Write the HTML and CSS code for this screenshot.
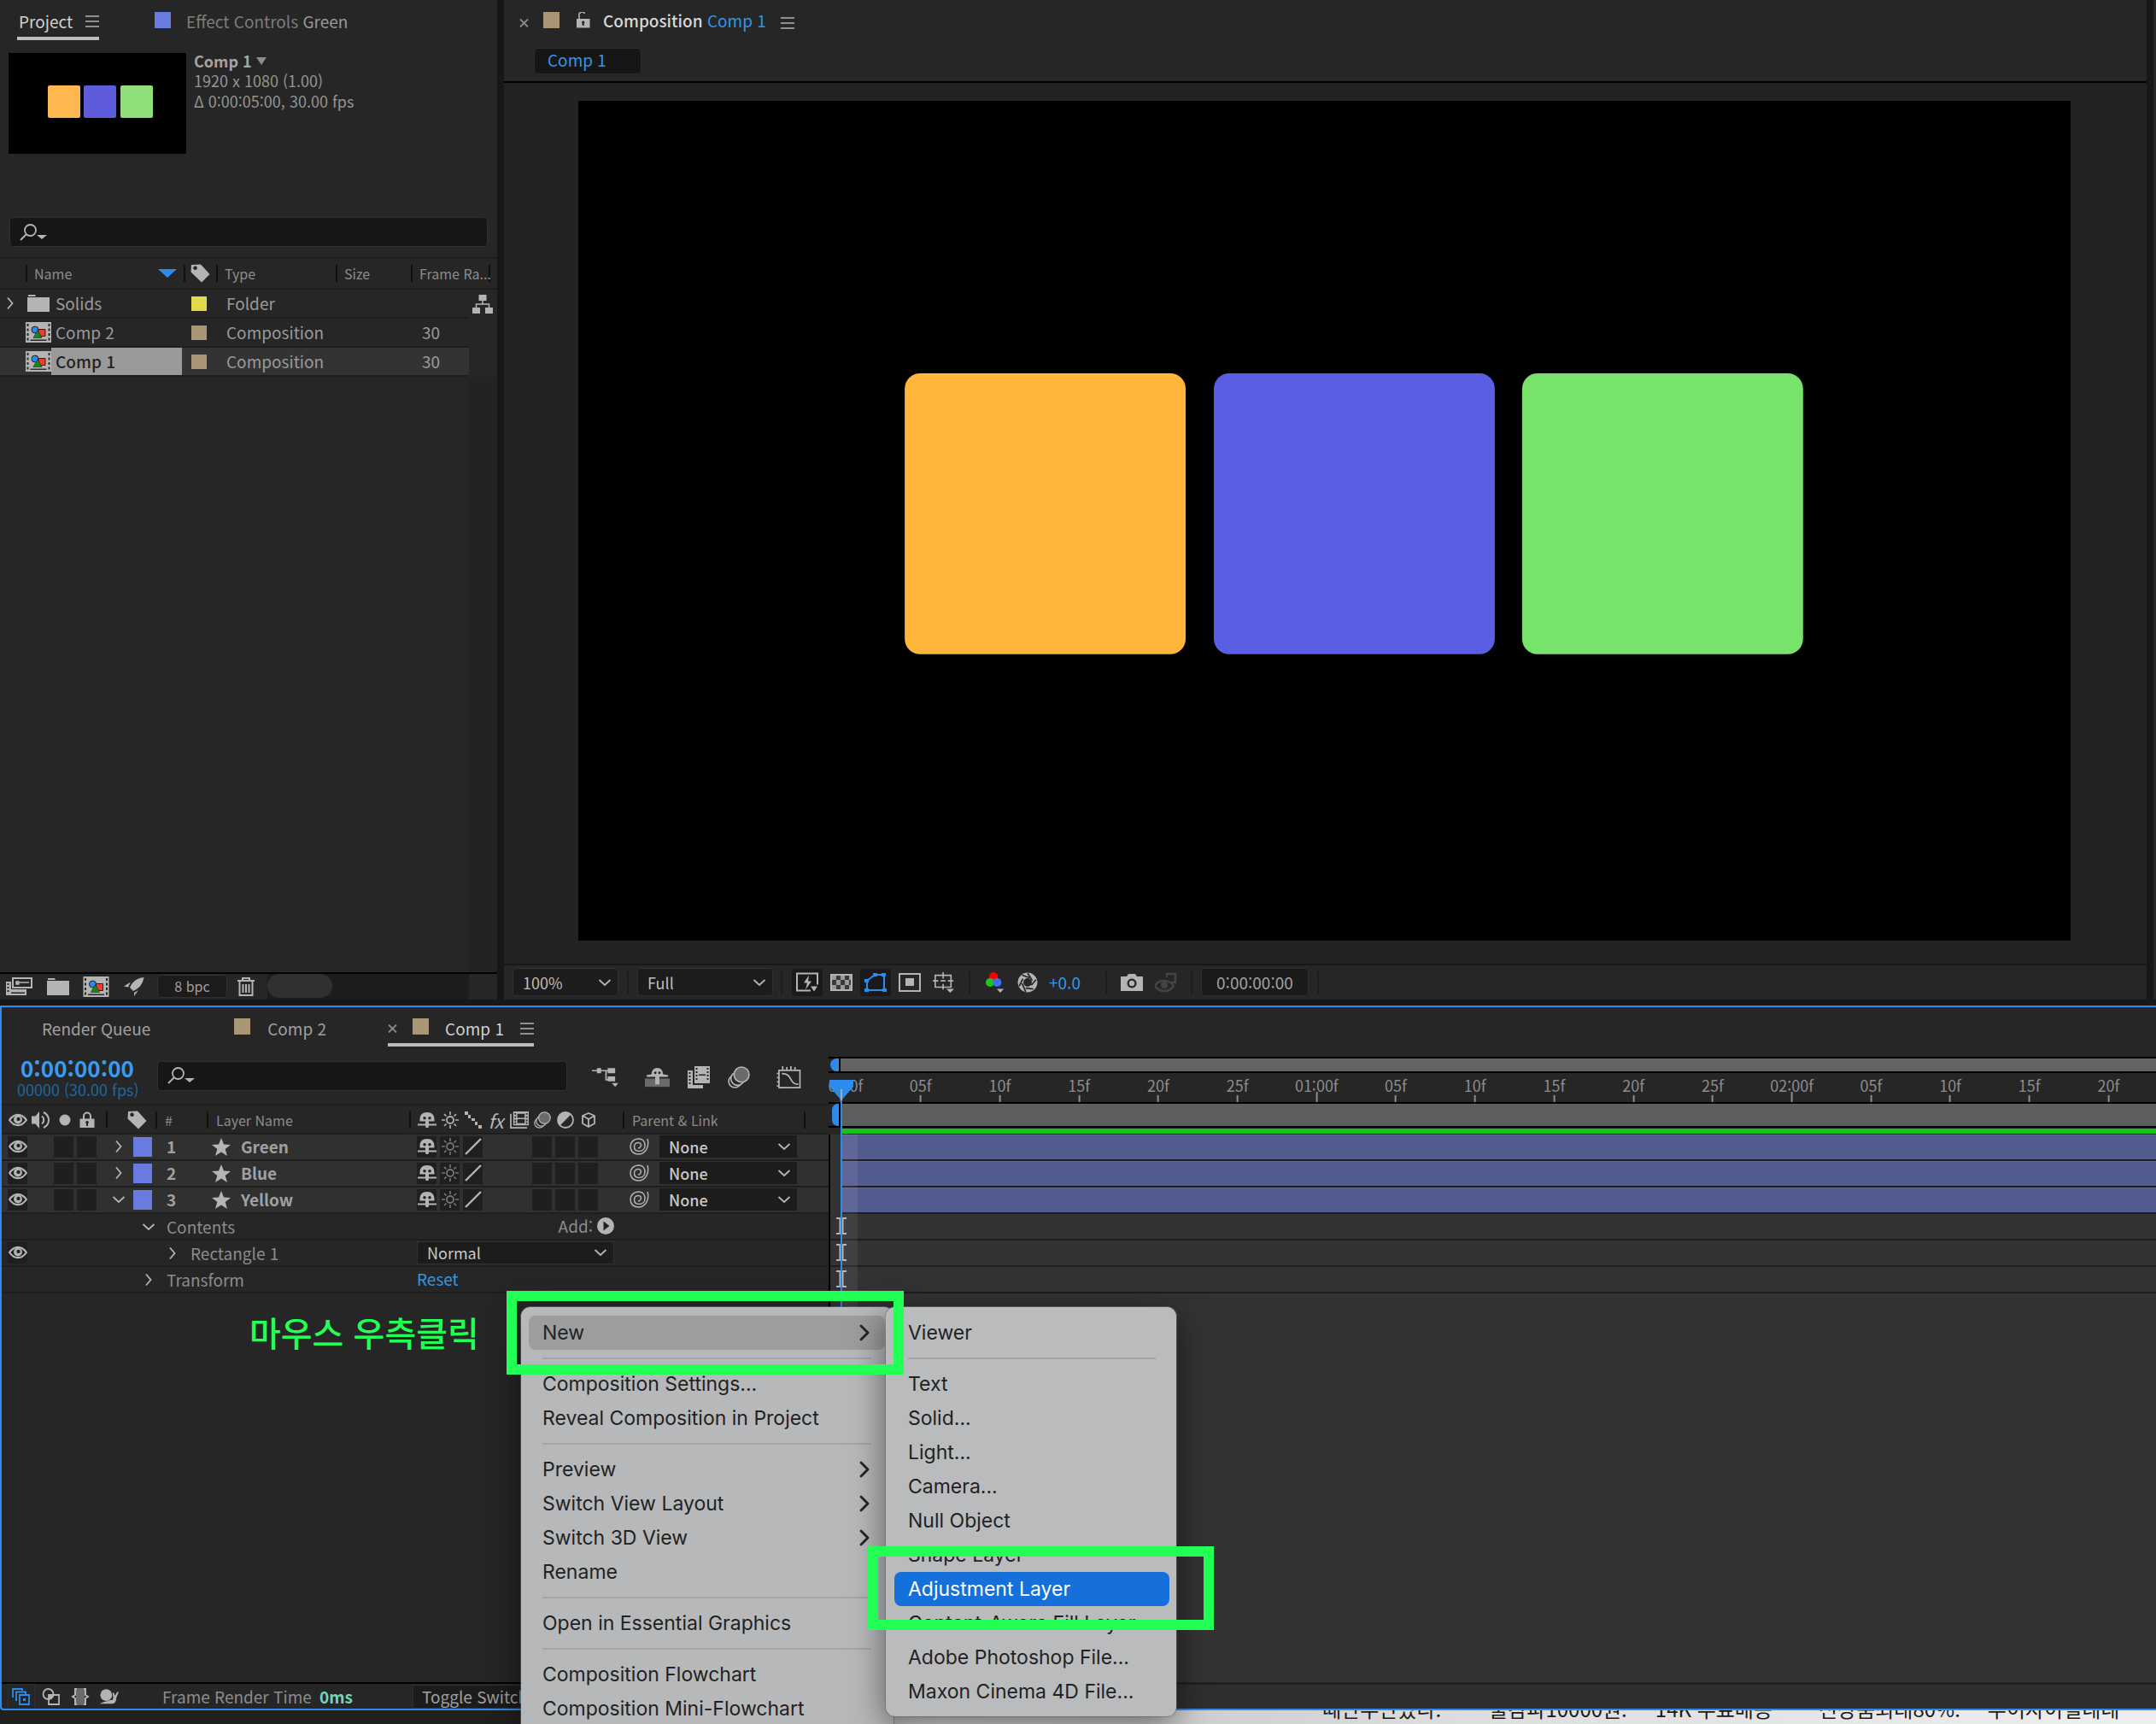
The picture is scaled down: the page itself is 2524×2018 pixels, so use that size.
FILE: index.html
```html
<!DOCTYPE html>
<html lang="ko">
<head>
<meta charset="utf-8">
<meta name="viewport" content="width=device-width, initial-scale=1">
<title>Composition Comp 1</title>
<link rel="stylesheet" href="styles.css">
</head>
<body>
<svg class="sprite" aria-hidden="true">
  <symbol id="i-menu" viewBox="0 0 16 14"><path d="M0 1h16M0 7h16M0 13h16" stroke="currentColor" stroke-width="1.5"/></symbol>
  <symbol id="i-close" viewBox="0 0 11 10"><path d="M1 .5l9 9M10 .5l-9 9" stroke="currentColor" stroke-width="1.8"/></symbol>
  <symbol id="i-right" viewBox="0 0 16 16"><path d="M5 1.500l5.500 6.500L5 14.500" fill="none" stroke="currentColor" stroke-width="1.8"/></symbol>
  <symbol id="i-more" viewBox="0 0 16 20"><path d="M4 2l8 8-8 8" fill="none" stroke="currentColor" stroke-width="2.800" stroke-linecap="round" stroke-linejoin="round"/></symbol>
  <symbol id="i-down" viewBox="0 0 16 16"><path d="M1.500 5l6.500 6 6.500-6" fill="none" stroke="currentColor" stroke-width="1.8"/></symbol>
  <symbol id="i-search" viewBox="0 0 32 20"><circle cx="12.500" cy="7.500" r="6.500" fill="none" stroke="currentColor" stroke-width="1.8"/><path d="M8 12l-7 7" stroke="currentColor" stroke-width="2"/><path d="M20 13h12l-6 5z" fill="currentColor"/></symbol>
  <symbol id="i-lock" viewBox="0 0 18 20"><path d="M5 9V5.500a4 4 0 0 1 8 0V9" fill="none" stroke="currentColor" stroke-width="2"/><path fill-rule="evenodd" d="M.5 8.500h17V19H.5zM9 11a1.800 1.800 0 0 0-1 3.300V17h2v-2.700A1.800 1.800 0 0 0 9 11z" fill="currentColor"/></symbol>
  <symbol id="i-unlock" viewBox="0 0 16 19"><path d="M3 8V4.500A3.500 3.500 0 0 1 9.500 2" fill="none" stroke="currentColor" stroke-width="1.600"/><path fill-rule="evenodd" d="M0 8h15.500v10.500H0zM7.700 10.500a1.800 1.800 0 0 0-1 3.200V16h2v-2.300a1.800 1.800 0 0 0-1-3.200z" fill="currentColor"/></symbol>
  <symbol id="i-tag" viewBox="0 0 23 22"><path fill-rule="evenodd" d="M1 1l11-.5L22.500 12 13 21.500.5 9.500zM5.500 2.500a2.300 2.300 0 1 0 .1 0z" fill="currentColor"/></symbol>
  <symbol id="i-folder" viewBox="0 0 26 20"><path d="M1 0h8l1 2H1zM0 3h26v17H0z" fill="currentColor"/></symbol>
  <symbol id="i-comp" viewBox="0 0 30 24"><path fill-rule="evenodd" d="M0 0h30v24H0zM1.500 2v3h2V2zm0 5.500v3h2v-3zm0 5.500v3h2v-3zm0 5.500v3h2v-3zM26.500 2v3h2V2zm0 5.500v3h2v-3zm0 5.500v3h2v-3zm0 5.500v3h2v-3zM5.500 20.500v1.500h19v-1.500z" fill="#b4b4b4"/><path d="M15 8.500h8v8h-8z" fill="#f03a34" stroke="#222" /><circle cx="11" cy="9" r="4" fill="#2d8ceb" stroke="#222"/><path d="M14 9.500l5 9H9z" fill="#118a1a" stroke="#222" stroke-width=".6"/></symbol>
  <symbol id="i-flow" viewBox="0 0 24 22"><path d="M7.500 0h9v7h-9zM0 15h9v7H0zM15 15h9v7h-9z" fill="currentColor"/><path d="M12 7v4M4.500 15v-4h15v4" fill="none" stroke="currentColor" stroke-width="1.500"/></symbol>
  <symbol id="i-interpret" viewBox="0 0 31 22"><path d="M8 1h22v11H8z" fill="none" stroke="currentColor" stroke-width="2"/><path d="M12 5h3v3h-3zM16 6h11" stroke="currentColor" fill="currentColor" stroke-width="1.500"/><path fill-rule="evenodd" d="M0 5h6v9h18v7H0zM1.500 7v2h2V7zm0 4v2h2v-2zm0 4v2h2v-2zM6 17.500h16V19H6z" fill="currentColor"/></symbol>
  <symbol id="i-rocket" viewBox="0 0 24 22"><path d="M23.500 0C15 1 10 5 7 12l4 4c7-3 11-8 12.500-16zM8 5.500L0 10.500l5 1zM12 18v4l5-7z" fill="currentColor"/></symbol>
  <symbol id="i-trash" viewBox="0 0 20 22"><path d="M0 4h20M6 4V1h8v3M2.500 5v16h15V5M6.500 8v10M10 8v10M13.500 8v10" fill="none" stroke="currentColor" stroke-width="2"/></symbol>
  <symbol id="i-eye" viewBox="0 0 20 14"><path d="M1 7c5-7.500 13-7.500 18 0-5 7.500-13 7.500-18 0z" fill="none" stroke="currentColor" stroke-width="2"/><circle cx="10" cy="6.500" r="4.500" fill="currentColor"/><circle cx="10.500" cy="6" r="2" fill="#222"/></symbol>
  <symbol id="i-speaker" viewBox="0 0 22 20"><path d="M0 5.500h4.500L9 0v20l-4.500-5.500H0z" fill="currentColor"/><path d="M12 5.500c3 2 3 7 0 9M14 1c8 4 8 14 0 18" fill="none" stroke="currentColor" stroke-width="2"/></symbol>
  <symbol id="i-dot" viewBox="0 0 22 20"><circle cx="12" cy="10" r="6.500" fill="currentColor"/></symbol>
  <symbol id="i-shy" viewBox="0 0 22 19"><path fill-rule="evenodd" d="M2.500 11C2 4 5 .5 11 .5S20 4 19.500 11H13v3h9v2h-9l-.5 2.500h-3L9 16H0v-2h9v-3zM8 5.500A1.600 1.600 0 1 0 8 9a1.600 1.600 0 0 0 0-3.500zm6 0A1.600 1.600 0 1 0 14 9a1.600 1.600 0 0 0 0-3.500z" fill="currentColor"/></symbol>
  <symbol id="i-sun" viewBox="0 0 20 20"><circle cx="10" cy="10" r="4" fill="none" stroke="currentColor" stroke-width="1.800"/><path d="M10 0v4M10 16v4M0 10h4M16 10h4M3 3l2.500 2.500M14.500 14.500L17 17M17 3l-2.500 2.500M5.500 14.500L3 17" stroke="currentColor" stroke-width="1.600"/></symbol>
  <symbol id="i-dots" viewBox="0 0 20 20"><path d="M0 0h4v4H0zM4 4h3v4H4zM8 8h4v3H8zM12 12h3v4h-3zM16 16h4v4h-4z" fill="currentColor"/></symbol>
  <symbol id="i-slash" viewBox="0 0 20 20"><path d="M1 19L19 1" stroke="currentColor" stroke-width="2.400"/></symbol>
  <symbol id="i-film" viewBox="0 0 23 21"><path fill-rule="evenodd" d="M4 0h19v17H4zM5.500 2v2h2V2zm0 4v2h2V6zm0 4v2h2v-2zm0 3.500v2h2v-2zM19.500 2v2h2V2zm0 4v2h2V6zm0 4v2h2v-2zm0 3.500v2h2v-2zM9 3v5h9V3zm0 6.500v5h9v-5z" fill="currentColor"/><path d="M1 3v17h20" fill="none" stroke="currentColor" stroke-width="1.800"/></symbol>
  <symbol id="i-blur" viewBox="0 0 25 25"><g stroke="currentColor" stroke-width="1.600"><circle cx="8" cy="17" r="7" fill="#262626"/><circle cx="11" cy="14" r="7.500" fill="#262626"/><circle cx="15.500" cy="9.500" r="8.500" fill="#6a6a6a"/></g></symbol>
  <symbol id="i-half" viewBox="0 0 20 20"><circle cx="10" cy="10" r="9" fill="none" stroke="currentColor" stroke-width="1.800"/><path d="M16.400 3.600A9 9 0 1 0 3.600 16.400z" fill="currentColor"/></symbol>
  <symbol id="i-cube" viewBox="-1 -1 20 20"><path d="M9 1l7 3v9l-7 4-7-4V4zM2 4l7 4 7-4M9 8v9" fill="none" stroke="currentColor" stroke-width="1.800"/></symbol>
  <symbol id="i-star" viewBox="0 0 22 21"><path d="M11 0l3 7.500 8 .4-6.300 5L18 21l-7-4.600L4 21l2.300-8.100L0 7.900l8-.4z" fill="currentColor"/></symbol>
  <symbol id="i-whip" viewBox="0 0 23 20"><path d="M21 1c2.500 9-2 18-11 18-5.500 0-9-4-9-9s4-9 9.500-9S18 5 18 9s-3 6.500-7 6.500S5.500 13 5.500 10 8 5.500 10.500 5.500 14 8 13 10s-2 2-3 1.500" fill="none" stroke="currentColor" stroke-width="1.500"/></symbol>
  <symbol id="i-play" viewBox="0 0 20 20"><circle cx="10" cy="10" r="10" fill="currentColor"/><path d="M7.500 4.500l7 5.500-7 5.500z" fill="#222"/></symbol>
  <symbol id="i-tree" viewBox="0 0 32 24"><path d="M0 4h28M17 4v11h4" stroke="currentColor" stroke-width="1.800" fill="none"/><path d="M6 1h5v6H6zM19 1h9v6h-9zM19 11h9v6h-9zM24 19h8l-4 4.500z" fill="currentColor"/></symbol>
  <symbol id="i-shybox" viewBox="0 0 30 23"><path d="M0 13h30v10H0z" fill="#6a6a6a"/><path fill-rule="evenodd" d="M8 8C8 3 11 0 15 0s7 3 7 8l6 1v2H17.500v9h-5v-9H2V9zM12.500 4.500a1.500 1.500 0 1 0 .1 0zm5 0a1.500 1.500 0 1 0 .1 0z" fill="currentColor"/></symbol>
  <symbol id="i-filmbig" viewBox="0 0 26 26"><path fill-rule="evenodd" d="M8 0h18v20H8zM9.500 2v2h2V2zm0 4v2h2V6zm0 4v2h2v-2zm0 4v2h2v-2zM22.500 2v2h2V2zm0 4v2h2V6zm0 4v2h2v-2zm0 4v2h2v-2zM13 9.500h8V11h-8z" fill="currentColor"/><path fill-rule="evenodd" d="M0 5h6v17h12v4H0zM1.500 7v2h2V7zm0 4v2h2v-2zm0 4v2h2v-2zm0 4v2h2v-2z" fill="currentColor"/></symbol>
  <symbol id="i-graph" viewBox="0 0 29 27"><path d="M2.500 5h25.500v21H2.500zM7 0v5M12 1v4M17 0v5M22 1v4M0 9h3M0 14h3M0 19h3M0 24h3" fill="none" stroke="currentColor" stroke-width="1.800"/><path d="M6 9c14 0 8 13 20 13" fill="none" stroke="currentColor" stroke-width="1.800"/></symbol>
  <symbol id="i-fast" viewBox="0 0 26 23"><path d="M25 14V1H1v20h16" fill="none" stroke="currentColor" stroke-width="2"/><path d="M15 3l-6 9h4l-2 8 7-10h-4zM17 16h8l-4 6z" fill="currentColor"/></symbol>
  <symbol id="i-checker" viewBox="0 0 26 20"><path d="M1 1h24v18H1z" fill="#3a3a3a" stroke="currentColor" stroke-width="2"/><path d="M2 2h5v5H2zM12 2h5v5h-5zM7 7h5v6H7zM17 7h5v6h-5zM2 13h5v5H2zM12 13h5v5h-5zM22 2h2v5h-2zM22 13h2v5h-2z" fill="#9a9a9a"/></symbol>
  <symbol id="i-mask" viewBox="0 0 26 22"><path d="M3 20V9l9-7h11v18z" fill="none" stroke="currentColor" stroke-width="2"/><path d="M0 18h5v4H0zM0 7h5v4H0zM10 0h5v4h-5zM20 0h5v4h-5zM21 18h5v4h-5z" fill="currentColor"/></symbol>
  <symbol id="i-region" viewBox="0 0 26 22"><path d="M1 1h24v20H1z" fill="none" stroke="currentColor" stroke-width="2"/><path d="M8 6h10v9H8z" fill="currentColor"/></symbol>
  <symbol id="i-grid" viewBox="0 0 28 26"><path d="M3 4h20v15H3zM13 0v8M13 15v7M0 11h7M19 11h7M10 11h6" fill="none" stroke="currentColor" stroke-width="1.800"/><path d="M17 21h10l-5 5z" fill="currentColor"/></symbol>
  <symbol id="i-rgb" viewBox="0 0 24 26"><circle cx="10" cy="5.500" r="5.500" fill="#f00"/><circle cx="5.500" cy="13" r="5.500" fill="#1cc41c"/><circle cx="14.500" cy="13" r="5.500" fill="#4169ff"/><path d="M14 21h9l-4.500 5z" fill="currentColor"/></symbol>
  <symbol id="i-aperture" viewBox="0 0 22 22"><circle cx="11" cy="11" r="7.500" fill="none" stroke="currentColor" stroke-width="6"/><path d="M11 1l5 8M20 8l-5 6M17 18l-8-1M9 21l-4-9M2 15l4-8M5 3l8 3" stroke="#262626" stroke-width="1.600"/></symbol>
  <symbol id="i-camera" viewBox="0 0 26 20"><path fill-rule="evenodd" d="M0 3h7l2-3h8l2 3h7v17H0zM13 5.500a5.500 5.500 0 1 0 .1 0z" fill="currentColor"/><circle cx="13" cy="11" r="3.200" fill="currentColor"/></symbol>
  <symbol id="i-ghost" viewBox="0 0 26 24"><path d="M0 16c5-8 17-8 22 0-5 8-17 8-22 0z" fill="none" stroke="currentColor" stroke-width="2.500"/><circle cx="11" cy="15" r="4" fill="currentColor"/><path d="M14 6V2h10v10h-5" fill="none" stroke="currentColor" stroke-width="2.500"/></symbol>
  <symbol id="i-stack" viewBox="0 0 22 20"><path d="M9 8h11v11H9zM6 14H5V4.500h11V7M2 10H1V1h11v2" fill="none" stroke="currentColor" stroke-width="1.800"/><path d="M13 12h3v3h-3z" fill="currentColor"/></symbol>
  <symbol id="i-modes" viewBox="0 0 22 20"><circle cx="7.500" cy="7" r="6" fill="none" stroke="currentColor" stroke-width="1.800"/><path d="M8 8h12v11H8z" fill="none" stroke="currentColor" stroke-width="1.800"/><path d="M8 8h5l-1 4-4 2z" fill="currentColor"/></symbol>
  <symbol id="i-braces" viewBox="0 0 22 20"><path d="M6 0h10v20H6z" fill="#6a6a6a"/><path d="M7 1H5v7l-3 2 3 2v7h2M15 1h2v7l3 2-3 2v7h-2" fill="none" stroke="currentColor" stroke-width="2"/></symbol>
  <symbol id="i-snail" viewBox="0 0 24 20"><circle cx="8" cy="8" r="7.500" fill="currentColor"/><path d="M0 19c4-3 10-3 14-5 1 1 3 0 3-3l-1-6h2l1 4 3-5h2l-3 7c0 5-2 8-6 8z" fill="currentColor"/></symbol>
  <symbol id="i-key" viewBox="0 0 14 20"><path d="M1 1h4l2 1 2-1h4M1 19h4l2-1 2 1h4" fill="none" stroke="#b4b4b4" stroke-width="2"/><path d="M7 2v16" stroke="#b4b4b4" stroke-width="5"/></symbol>
</svg>

<div class="app">
  <div class="top">
    <section class="project">
      <header class="tabs tabs-project">
        <button class="tab tab-active">Project <svg class="i16"><use href="#i-menu"/></svg></button>
        <button class="tab tab-effect"><i class="swatch blue"></i><span>Effect Controls <b>Green</b></span></button>
      </header>
      <div class="info">
        <svg class="thumb" viewBox="0 0 208 118"><path fill="#000" d="M0 0h208v118H0z"/><rect x="46" y="38" width="38" height="38" rx="2" fill="#ffb84f"/><rect x="88" y="38" width="38" height="38" rx="2" fill="#5f5cdc"/><rect x="131" y="38" width="38" height="38" rx="2" fill="#8fe078"/></svg>
        <div class="meta">
          <strong>Comp 1 <svg viewBox="0 0 12 9"><path d="M0 0h12L6 9z" fill="#8c8c8c"/></svg></strong>
          <span>1920 x 1080 (1.00)</span>
          <span>Δ 0:00:05:00, 30.00 fps</span>
        </div>
      </div>
      <label class="search search-project"><svg><use href="#i-search"/></svg><input type="search" aria-label="Search project"></label>
      <table class="files">
        <colgroup><col class="c-lead"><col class="c-name"><col class="c-tag"><col class="c-type"><col class="c-size"><col class="c-rate"><col></colgroup>
        <thead><tr><th></th><th class="sep"><div class="sorted">Name <svg viewBox="0 0 22 10"><path d="M0 0h22L11 10z" fill="#2d8ceb"/></svg></div></th><th class="sep icon-cell" aria-label="Label"><svg class="tag"><use href="#i-tag"/></svg></th><th class="sep">Type</th><th class="sep">Size</th><th class="sep sep-end" colspan="2">Frame Ra...</th></tr></thead>
        <tbody>
          <tr><td><svg class="i16"><use href="#i-right"/></svg></td><td><div class="file"><svg class="folder"><use href="#i-folder"/></svg><span>Solids</span></div></td><td><i class="chip yellow"></i></td><td>Folder</td><td></td><td></td><td class="flowcell"><svg class="flow"><use href="#i-flow"/></svg></td></tr>
          <tr><td></td><td><div class="file"><svg><use href="#i-comp"/></svg><span>Comp 2</span></div></td><td><i class="chip tan"></i></td><td>Composition</td><td></td><td class="num">30</td><td class="bare"></td></tr>
          <tr class="picked"><td></td><td><div class="file"><svg><use href="#i-comp"/></svg><span>Comp 1</span></div></td><td><i class="chip tan"></i></td><td>Composition</td><td></td><td class="num">30</td><td class="bare"></td></tr>
        </tbody>
      </table>
      <div class="empty"></div>
      <footer class="project-bar">
        <button aria-label="Interpret footage"><svg class="w31"><use href="#i-interpret"/></svg></button>
        <button aria-label="New folder"><svg class="w26"><use href="#i-folder"/></svg></button>
        <button aria-label="New composition"><svg class="w31"><use href="#i-comp"/></svg></button>
        <button aria-label="Project settings"><svg class="w24"><use href="#i-rocket"/></svg></button>
        <button class="bpc">8 bpc</button>
        <button aria-label="Delete"><svg class="w20"><use href="#i-trash"/></svg></button>
        <div class="scroll"><i></i></div>
      </footer>
    </section>

    <section class="viewer">
      <header class="tabs tabs-viewer">
        <button class="plain" aria-label="Close"><svg class="i11"><use href="#i-close"/></svg></button>
        <i class="swatch tan"></i>
        <svg class="unlock"><use href="#i-unlock"/></svg>
        <span class="title">Composition <a href="#">Comp 1</a></span>
        <button class="plain" aria-label="Panel menu"><svg class="i16"><use href="#i-menu"/></svg></button>
      </header>
      <div class="crumbs"><button>Comp 1</button></div>
      <div class="stage">
        <svg class="canvas" viewBox="0 0 1747 983"><rect x="382" y="319" width="329" height="329" rx="18" fill="#ffb63a"/><rect x="744" y="319" width="329" height="329" rx="18" fill="#5a5ee2"/><rect x="1105" y="319" width="329" height="329" rx="18" fill="#77e36b"/></svg>
      </div>
      <footer class="viewer-bar">
        <label class="pick pick-zoom"><select aria-label="Magnification"><option>100%</option></select><svg class="i16"><use href="#i-down"/></svg></label>
        <i class="rule"></i>
        <label class="pick pick-res"><select aria-label="Resolution"><option>Full</option></select><svg class="i16"><use href="#i-down"/></svg></label>
        <i class="rule"></i>
        <div class="tools">
          <button class="well" aria-label="Fast previews"><svg><use href="#i-fast"/></svg></button>
          <button aria-label="Transparency grid"><svg><use href="#i-checker"/></svg></button>
          <button class="well on" aria-label="Mask visibility"><svg><use href="#i-mask"/></svg></button>
          <button aria-label="Region of interest"><svg><use href="#i-region"/></svg></button>
          <button aria-label="Guides"><svg><use href="#i-grid"/></svg></button>
        </div>
        <i class="rule"></i>
        <div class="tools tools-color">
          <button aria-label="Channels"><svg><use href="#i-rgb"/></svg></button>
          <button aria-label="Exposure"><svg><use href="#i-aperture"/></svg></button>
          <a href="#">+0.0</a>
        </div>
        <i class="rule"></i>
        <div class="tools">
          <button aria-label="Snapshot"><svg><use href="#i-camera"/></svg></button>
          <button class="dim" aria-label="Show snapshot"><svg><use href="#i-ghost"/></svg></button>
        </div>
        <i class="rule"></i>
        <button class="timebox">0:00:00:00</button>
        <i class="rule"></i>
      </footer>
    </section>
    <aside class="edge"></aside>
  </div>

  <section class="timeline">
    <header class="tabs tabs-timeline">
      <button class="tab tab-queue">Render Queue</button>
      <button class="tab tab-comp2"><i class="swatch tan"></i>Comp 2</button>
      <button class="tab tab-active tab-comp1"><svg class="i11"><use href="#i-close"/></svg><i class="swatch tan"></i>Comp 1 <svg class="i16"><use href="#i-menu"/></svg></button>
    </header>
    <div class="split">
      <div class="outline">
        <div class="controls">
          <div class="clock"><strong>0:00:00:00</strong><span>00000 (30.00 fps)</span></div>
          <label class="search search-layers"><svg><use href="#i-search"/></svg><input type="search" aria-label="Search layers"></label>
          <div class="switchbar">
            <svg class="w31"><use href="#i-tree"/></svg>
            <svg class="far"><use href="#i-shybox"/></svg>
            <svg class="w26"><use href="#i-filmbig"/></svg>
            <svg class="w26"><use href="#i-blur"/></svg>
            <svg class="far"><use href="#i-graph"/></svg>
          </div>
        </div>
        <div class="row head">
          <div class="cells av"><svg><use href="#i-eye"/></svg><svg><use href="#i-speaker"/></svg><svg><use href="#i-dot"/></svg><svg><use href="#i-lock"/></svg></div>
          <div class="sep"><svg class="tag"><use href="#i-tag"/></svg></div>
          <div class="sep hash">#</div>
          <div class="sep lname">Layer Name</div>
          <div class="sep cells sw"><svg><use href="#i-shy"/></svg><svg><use href="#i-sun"/></svg><svg><use href="#i-dots"/></svg><em>fx</em><svg><use href="#i-film"/></svg><svg><use href="#i-blur"/></svg><svg><use href="#i-half"/></svg><svg><use href="#i-cube"/></svg></div>
          <div class="sep parent">Parent &amp; Link</div>
          <div class="sep"></div>
        </div>
        <div class="row layer">
          <div class="cells av"><i><svg><use href="#i-eye"/></svg></i><b></b><i></i><i></i></div>
          <div class="label"><svg class="i16"><use href="#i-right"/></svg><i class="box"></i></div>
          <div class="index">1</div>
          <div class="name"><svg><use href="#i-star"/></svg>Green</div>
          <div class="cells sw"><i><svg><use href="#i-shy"/></svg></i><i class="faint"><svg><use href="#i-sun"/></svg></i><i><svg><use href="#i-slash"/></svg></i><b></b><b></b><i></i><i></i><i></i></div>
          <div class="link"><svg class="whip"><use href="#i-whip"/></svg><label class="pick pick-parent"><select aria-label="Parent of Green"><option>None</option></select><svg class="i16"><use href="#i-down"/></svg></label></div>
        </div>
        <div class="row layer">
          <div class="cells av"><i><svg><use href="#i-eye"/></svg></i><b></b><i></i><i></i></div>
          <div class="label"><svg class="i16"><use href="#i-right"/></svg><i class="box"></i></div>
          <div class="index">2</div>
          <div class="name"><svg><use href="#i-star"/></svg>Blue</div>
          <div class="cells sw"><i><svg><use href="#i-shy"/></svg></i><i class="faint"><svg><use href="#i-sun"/></svg></i><i><svg><use href="#i-slash"/></svg></i><b></b><b></b><i></i><i></i><i></i></div>
          <div class="link"><svg class="whip"><use href="#i-whip"/></svg><label class="pick pick-parent"><select aria-label="Parent of Blue"><option>None</option></select><svg class="i16"><use href="#i-down"/></svg></label></div>
        </div>
        <div class="row layer">
          <div class="cells av"><i><svg><use href="#i-eye"/></svg></i><b></b><i></i><i></i></div>
          <div class="label"><svg class="i16"><use href="#i-down"/></svg><i class="box"></i></div>
          <div class="index">3</div>
          <div class="name"><svg><use href="#i-star"/></svg>Yellow</div>
          <div class="cells sw"><i><svg><use href="#i-shy"/></svg></i><i class="faint"><svg><use href="#i-sun"/></svg></i><i><svg><use href="#i-slash"/></svg></i><b></b><b></b><i></i><i></i><i></i></div>
          <div class="link"><svg class="whip"><use href="#i-whip"/></svg><label class="pick pick-parent"><select aria-label="Parent of Yellow"><option>None</option></select><svg class="i16"><use href="#i-down"/></svg></label></div>
        </div>
        <div class="row prop">
          <div></div>
          <div class="pname"><svg class="i16"><use href="#i-down"/></svg>Contents</div>
          <div class="pval"><div class="add">Add: <button class="plain" aria-label="Add"><svg class="w20"><use href="#i-play"/></svg></button></div></div>
        </div>
        <div class="row prop">
          <div class="cells av"><i><svg><use href="#i-eye"/></svg></i></div>
          <div class="pname deep"><svg class="i16"><use href="#i-right"/></svg>Rectangle 1</div>
          <div class="pval"><label class="pick pick-mode"><select aria-label="Blend mode"><option>Normal</option></select><svg class="i16"><use href="#i-down"/></svg></label></div>
        </div>
        <div class="row prop">
          <div></div>
          <div class="pname"><svg class="i16"><use href="#i-right"/></svg>Transform</div>
          <div class="pval"><a href="#">Reset</a></div>
        </div>
      </div>
      <div class="tracks">
        <div class="navbar"><i class="handle"></i><i class="bar"></i></div>
        <div class="ruler">
          <span class="long">00:00f</span><span>05f</span><span>10f</span><span>15f</span><span>20f</span><span>25f</span><span class="long">01:00f</span><span>05f</span><span>10f</span><span>15f</span><span>20f</span><span>25f</span><span class="long">02:00f</span><span>05f</span><span>10f</span><span>15f</span><span>20f</span>
        </div>
        <div class="workarea"><i class="handle"></i><i class="bar"></i></div>
        <div class="cache"></div>
        <div class="lanes">
          <div class="lane clip"></div>
          <div class="lane clip"></div>
          <div class="lane clip"></div>
          <div class="lane"><svg><use href="#i-key"/></svg></div>
          <div class="lane"><svg><use href="#i-key"/></svg></div>
          <div class="lane"><svg><use href="#i-key"/></svg></div>
        </div>
        <svg class="playhead" viewBox="0 0 28 24"><path d="M0 0h28v8L14 24 0 8z" fill="#2d8ceb"/><path d="M14 11v13" stroke="#aaa" stroke-width="2"/></svg>
        <i class="playline"></i>
      </div>
    </div>
    <footer class="status">
      <div class="status-left">
        <button class="toggled" aria-label="Layer switches"><svg><use href="#i-stack"/></svg></button>
        <button aria-label="Transfer controls"><svg><use href="#i-modes"/></svg></button>
        <button aria-label="In and out"><svg><use href="#i-braces"/></svg></button>
        <button aria-label="Render time"><svg><use href="#i-snail"/></svg></button>
        <span class="render">Frame Render Time <strong>0ms</strong></span>
        <button class="modes">Toggle Switches / Modes</button>
      </div>
      <div class="status-right"></div>
    </footer>
  </section>

  <div class="desktop"><span>때만두만났다.</span><span>물감파10000원.</span><span>14K 무료배송</span><span>신상품최대80%.</span><span>무이자이벌네네</span></div>

  <p class="note">마우스 우측클릭</p>

  <ul class="menu menu-main">
    <li class="current"><button>New <svg><use href="#i-more"/></svg></button></li>
    <li class="line"></li>
    <li><button>Composition Settings...</button></li>
    <li><button>Reveal Composition in Project</button></li>
    <li class="line"></li>
    <li><button>Preview <svg><use href="#i-more"/></svg></button></li>
    <li><button>Switch View Layout <svg><use href="#i-more"/></svg></button></li>
    <li><button>Switch 3D View <svg><use href="#i-more"/></svg></button></li>
    <li><button>Rename</button></li>
    <li class="line"></li>
    <li><button>Open in Essential Graphics</button></li>
    <li class="line"></li>
    <li><button>Composition Flowchart</button></li>
    <li><button>Composition Mini-Flowchart</button></li>
  </ul>
  <ul class="menu menu-sub">
    <li><button>Viewer</button></li>
    <li class="line"></li>
    <li><button>Text</button></li>
    <li><button>Solid...</button></li>
    <li><button>Light...</button></li>
    <li><button>Camera...</button></li>
    <li><button>Null Object</button></li>
    <li><button>Shape Layer</button></li>
    <li class="active"><button>Adjustment Layer</button></li>
    <li><button>Content-Aware Fill Layer...</button></li>
    <li><button>Adobe Photoshop File...</button></li>
    <li><button>Maxon Cinema 4D File...</button></li>
  </ul>
  <div class="frame frame-new"></div>
  <div class="frame frame-adjust"></div>
</div>
</body>
</html>
```
FILE: styles.css
```css
* { box-sizing: border-box; }
:root {
  --ui: "Noto Sans CJK KR", "Noto Sans", sans-serif;
  --panel: #262626;
  --gap: #171717;
  --text: #a0a0a0;
  --icon: #b4b4b4;
  --blue: #2d8ceb;
  --link: #3096e6;
  --tan: #a89674;
}
body { margin: 0; background: var(--gap); color: var(--text); font: 19px/24px var(--ui); font-variant-ligatures: no-contextual; }
button, input, select { font: inherit; font-variant-ligatures: inherit; color: inherit; background: none; border: 0; margin: 0; padding: 0; appearance: none; outline: 0; text-align: left; }
a { color: var(--link); text-decoration: none; }
i { display: block; font-style: normal; }
svg { display: block; flex: none; color: var(--icon); }
.sprite { position: absolute; width: 0; height: 0; }
.i16 { width: 16px; height: 16px; }
.i11 { width: 11px; height: 10px; color: #8a8a8a; }
.w31 { width: 31px; height: 24px; }
.w26 { width: 26px; height: 24px; }
.w24 { width: 24px; height: 22px; }
.w20 { width: 20px; height: 22px; }
.tag { width: 23px; height: 22px; }
.plain { display: flex; }

.app { position: relative; display: flex; flex-direction: column; min-height: 100vh; overflow: hidden; }
.top { display: grid; grid-template-columns: 582px 1fr 3px; gap: 0 8px; padding-bottom: 7px; }
.edge { background: var(--panel); }

/* Tabs */
.tabs { display: flex; align-items: flex-start; }
.tab { display: flex; align-items: center; height: 32px; }
.tab .i16 { height: 14px; }
.tab-active { color: #d0d0d0; border-bottom: 4px solid #bcbcbc; }
.swatch { width: 19px; height: 19px; background: var(--tan); }
.swatch.blue { background: #687ce0; }
.tan { background: var(--tan); }

/* Project panel */
.project { background: var(--panel); display: flex; flex-direction: column; }
.tabs-project { padding: 7px 0 0 20px; gap: 65px; height: 62px; }
.tabs-project .tab-active { height: 40px; gap: 15px; padding: 0 0 0 2px; }
.tab-effect { height: 36px; gap: 18px; color: #7c7c7c; }
.tab-effect .swatch { margin-bottom: 4px; }
.tab-effect b { font-weight: 400; color: #989898; }
.info { display: flex; gap: 9px; padding-left: 10px; height: 192px; }
.thumb { width: 208px; height: 118px; }
.meta { display: flex; flex-direction: column; margin-top: -2px; color: #949494; font-size: 18px; }
.meta strong { display: flex; align-items: center; gap: 5px; height: 22px; color: #a4a4a4; }
.meta strong svg { width: 12px; height: 9px; }
.search { display: flex; align-items: center; background: #161616; border: 1px solid #303030; border-radius: 4px; height: 35px; padding-left: 11px; }
.search svg { width: 32px; height: 20px; }
.search input { flex: 1; min-width: 0; }
.search-project { margin: 0 11px 12px; }
.files { width: 100%; table-layout: fixed; border-collapse: collapse; }
.c-lead { width: 30px; } .c-name { width: 185px; } .c-tag { width: 38px; } .c-type { width: 140px; } .c-size { width: 88px; } .c-rate { width: 68px; }
.files th { height: 36px; padding: 0 0 0 10px; font-weight: 400; font-size: 16px; color: #8c8c8c; text-align: left; border-top: 2px solid #1e1e1e; border-bottom: 2px solid #1e1e1e; white-space: nowrap; }
.sep { background: linear-gradient(#111, #111) left center / 2px 20px no-repeat; }
.files .sep-end { background: linear-gradient(#111, #111) left center / 2px 20px no-repeat, linear-gradient(#111, #111) 91px center / 2px 20px no-repeat; }
.files .icon-cell { padding-left: 8px; }
.sorted { display: flex; align-items: center; justify-content: space-between; padding-right: 8px; }
.sorted svg { width: 22px; height: 10px; }
.files td { height: 34px; padding: 0; border-bottom: 2px solid #1e1e1e; color: #9a9a9a; }
.files td:first-child { padding-left: 4px; }
.files td:nth-child(4) { padding-left: 12px; }
.files .num { text-align: right; padding-right: 34px; }
.file { display: flex; align-items: center; }
.file svg { width: 30px; height: 24px; }
.file .folder { width: 26px; height: 20px; margin: 0 2px; }
.file span { flex: 1; padding-left: 5px; line-height: 32px; margin-right: 2px; }
.chip { width: 18px; height: 17px; margin-left: 9px; }
.yellow { background: #e3d94b; }
.picked td { background: #333; }
.picked .file span { background: #9a9a9a; color: #222; font-weight: 500; }
.files td.bare { background: none; border: 0; }
.files .flowcell { padding-left: 4px; border: 0; }
.flow { width: 24px; height: 22px; }
.empty { flex: 1; border-right: 33px solid #232323; }
.project-bar { display: flex; align-items: center; height: 32px; padding-left: 7px; border-top: 2px solid #000; }
.project-bar .w26 { height: 20px; margin-left: 17px; }
.project-bar button:nth-child(3) { margin-left: 16px; }
.project-bar .w24 { margin-left: 17px; }
.project-bar .bpc { margin: 0 12px 0 15px; width: 82px; height: 27px; text-align: center; font-size: 16px; line-height: 25px; background: #1c1c1c; border: 1px solid #303030; border-radius: 4px; }
.scroll { flex: 1; margin: 0 33px 0 15px; height: 30px; background: #1c1c1c; }
.scroll i { width: 76px; height: 28px; border-radius: 14px; background: #303030; }

/* Viewer panel */
.viewer { background: var(--panel); }
.tabs-viewer { height: 56px; padding: 14px 0 0 18px; }
.tabs-viewer .i11 { margin-top: 8px; }
.tabs-viewer .swatch { margin: 0 20px 0 17px; }
.unlock { width: 16px; height: 19px; margin-right: 15px; }
.title { color: #d8d8d8; font-weight: 500; line-height: 20px; }
.title a { font-weight: 400; }
.tabs-viewer .i16 { height: 14px; margin: 6px 0 0 17px; }
.crumbs { height: 41px; padding-left: 35px; border-bottom: 2px solid #000; }
.crumbs button { width: 126px; height: 31px; padding: 0 0 3px 15px; background: #161616; border: 1px solid #2e2e2e; border-radius: 4px; color: var(--link); }
.stage { background: #232323; padding: 21px 89px 27px 87px; }
.canvas { width: 100%; aspect-ratio: 16 / 9; background: #000; }
.viewer-bar { display: flex; align-items: center; height: 42px; padding-left: 10px; border-top: 2px solid #181818; white-space: nowrap; }
.rule { width: 2px; height: 26px; background: #1c1c1c; }
.pick { display: grid; align-items: center; background: #1c1c1c; border: 1px solid #303030; color: #bcbcbc; font-size: 18px; }
.pick > * { grid-area: 1 / 1; }
.pick select { width: 100%; height: 100%; padding-left: 11px; }
.pick svg { justify-self: end; margin-right: 7px; pointer-events: none; }
.pick-zoom, .pick-res { height: 33px; border-radius: 4px; }
.pick-zoom { width: 124px; margin-right: 10px; }
.pick-res { width: 159px; margin: 0 9px 0 10px; }
.tools { display: flex; align-items: center; gap: 14px; padding: 0 16px; }
.tools svg { width: 26px; height: 24px; }
.tools-color { gap: 12px; padding-right: 29px; }
.tools .well { background: #1a1a1a; padding: 4px 5px; margin: 0 -5px; border-radius: 3px; }
.tools .on svg { color: var(--blue); }
.tools .dim svg { color: #444; }
.timebox { width: 126px; height: 33px; margin: 0 10px; text-align: center; background: #1a1a1a; border: 1px solid #2e2e2e; border-radius: 4px; }

/* Timeline panel */
.timeline { flex: 1; display: flex; flex-direction: column; background: var(--panel); border: 2px solid var(--blue); border-right: 0; border-bottom-left-radius: 4px; }
.tabs-timeline { height: 49px; padding: 8px 0 0 47px; }
.tabs-timeline .tab { height: 38px; padding-bottom: 4px; }
.tab-queue { margin-right: 98px; }
.tab-comp2 { gap: 20px; margin-right: 72px; }
.tab-comp2 .swatch, .tab-comp1 .swatch { margin-bottom: 4px; }
.tabs-timeline .tab-comp1 { padding-bottom: 0; }
.tab-comp1 .swatch { margin: 0 19px 4px 18px; }
.tab-comp1 .i16 { margin-left: 19px; }
.split { flex: 1; display: grid; grid-template-columns: 968px 1fr; }
.controls { display: flex; height: 64px; padding-left: 18px; }
.clock { display: flex; flex-direction: column; width: 164px; color: #1c66a6; font-size: 18px; }
.clock strong { padding: 8px 0 0 4px; font-size: 26px; line-height: 28px; color: #389cf0; }
.clock span { line-height: 22px; }
.search-layers { width: 480px; margin-top: 14px; }
.switchbar { display: flex; align-items: center; gap: 21px; padding: 2px 0 0 29px; }
.switchbar .far { width: 29px; margin-left: 10px; }
.switchbar .w26, .switchbar .far { height: 26px; }
.row { display: grid; grid-template-columns: 122px 58px 60px 237px 250px 212px 1fr; align-items: center; height: 31px; border-bottom: 2px solid #1e1e1e; }
.head { height: 36px; padding-top: 2px; border-top: 2px solid #1e1e1e; font-size: 16px; color: #8c8c8c; background: linear-gradient(#111, #111) 122px center / 2px 20px no-repeat; }
.head .sep { display: flex; align-items: center; height: 30px; padding-left: 11px; }
.head .sep:nth-child(2) { background: none; padding-left: 25px; }
.head .cells.sw { display: grid; padding-left: 9px; }
.cells { display: grid; grid-auto-flow: column; grid-auto-columns: 23px; gap: 4px; align-items: center; justify-items: center; justify-content: start; }
.av { padding-left: 7px; }
.sw { padding-left: 9px; }
.cells svg { width: 22px; height: 20px; }
.cells i { width: 23px; height: 25px; display: grid; place-items: center; background: #1f1f1f; }
.cells em { font-size: 22px; line-height: 20px; color: var(--icon); }
.cells .faint svg { color: #777; }
.layer { background: #303030; font-weight: 700; }
.label { display: flex; align-items: center; gap: 9px; padding-left: 7px; }
.box { width: 22px; height: 23px; background: #687ce0; }
.index { padding-left: 13px; }
.name { display: flex; align-items: center; gap: 12px; padding-left: 6px; }
.name svg { width: 22px; height: 21px; }
.link { display: flex; align-items: center; gap: 12px; padding-left: 8px; font-weight: 500; }
.whip { width: 23px; height: 20px; }
.pick-parent { width: 161px; height: 26px; border: 0; color: #c8c8c8; }
.prop { grid-template-columns: 122px 355px 1fr; }
.pname { display: flex; align-items: center; gap: 13px; margin-top: 2px; padding-left: 42px; color: #8c8c8c; }
.deep { padding-left: 70px; }
.pval { padding-left: 9px; }
.add { display: flex; justify-content: flex-end; align-items: center; gap: 5px; width: 231px; color: #8c8c8c; }
.pick-mode { width: 231px; height: 27px; color: #c8c8c8; }

.tracks { position: relative; display: flex; flex-direction: column; overflow: hidden; }
.navbar, .workarea { display: flex; padding-left: 2px; border-top: 2px solid #000; border-bottom: 2px solid #000; }
.navbar { height: 19px; margin-top: 9px; }
.workarea { height: 30px; padding-left: 4px; }
.handle { width: 10px; background: var(--blue); border-radius: 9px 0 0 9px; }
.bar { flex: 1; background: #646464; border-left: 2px solid #000; }
.workarea .handle { width: 8px; border-radius: 7px 0 0 7px; }
.workarea .bar { background: #5e5e5e; }
.ruler { display: flex; height: 34px; padding-left: 15px; overflow: hidden; color: #8c8c8c; font-size: 18px; }
.ruler span { flex: 0 0 6.025%; height: 34px; line-height: 28px; text-align: center; transform: translateX(-50%); background: linear-gradient(#8c8c8c, #8c8c8c) center bottom / 2px 8px no-repeat; }
.ruler .long { background-size: 2px 12px; }
.cache { height: 8px; margin-left: 15px; border: solid #1e1e1e; border-width: 1px 0; background: #18c020; }
.lanes { flex: 1; background: #333; border-left: 2px solid #000; }
.lane { height: 31px; border-bottom: 2px solid #1e1e1e; padding: 3px 0 0 6px; }
.lane svg { width: 14px; height: 22px; }
.clip { margin-left: 13px; background: #535c8f; border-top: 1px solid #5c6699; }
.playhead { position: absolute; left: 1px; top: 36px; width: 28px; height: 24px; }
.playline { position: absolute; left: 14px; top: 60px; bottom: 0; width: 20px; border-left: 2px solid var(--blue); background: linear-gradient(#fff1, #fff1) 0 40px no-repeat; }

.status { display: grid; grid-template-columns: 968px 1fr; height: 31px; white-space: nowrap; }
.status-left { display: flex; align-items: center; border-top: 2px solid #000; padding-left: 7px; overflow: hidden; }
.status-left button { padding: 3px 4px; }
.status-left .toggled { border: 1px solid #303030; }
.status-left .toggled svg { color: var(--blue); }
.status-left svg { width: 22px; height: 22px; }
.status-left button + button { margin-left: 4px; }
.render { margin-left: 47px; width: 293px; color: #8c8c8c; }
.render strong { margin-left: 4px; color: #6fd8b4; }
.status-left .modes { height: 28px; padding: 0 10px; background: #1c1c1c; border: 1px solid #303030; line-height: 22px; }
.status-right { background: #2f2f2f; border-top: 3px solid #202020; }

.desktop { display: flex; height: 16px; overflow: hidden; padding-left: 1548px; background: linear-gradient(90deg, #22201e 610px, #d8d8d8 1046px, #cfcfcf 1400px, #ddd 1700px, #eee); color: #1a1a1a; font-size: 24px; line-height: 0; white-space: nowrap; }
.desktop span { margin-top: -2px; }
.desktop span:nth-child(1) { margin-right: 56px; }
.desktop span:nth-child(2) { margin-right: 33px; }
.desktop span:nth-child(3) { margin-right: 54px; }
.desktop span:nth-child(4) { margin-right: 32px; }

/* Overlays */
.note { position: absolute; left: 292px; top: 1535px; margin: 0; font-size: 40px; line-height: 48px; font-weight: 500; color: #22ff55; white-space: nowrap; }
.menu { position: absolute; top: 1530px; margin: 0; padding: 10px; list-style: none; font: 23px/40px Inter, "Liberation Sans", sans-serif; color: #222; background: #b7b8ba; border-radius: 11px; box-shadow: 0 10px 40px #0008, 0 0 0 1px #8888; white-space: nowrap; }
.menu button { display: flex; align-items: center; justify-content: space-between; width: 100%; height: 40px; padding: 0 16px; border-radius: 8px; }
.menu svg { width: 16px; height: 20px; color: #222; }
.menu .line { height: 20px; padding: 9px 16px; }
.menu .line::before { content: ""; display: block; height: 2px; background: #a3a4a6; }
.menu-main { left: 610px; width: 436px; bottom: 0; padding-left: 9px; border-radius: 11px 11px 0 0; }
.menu-sub { left: 1037px; width: 340px; padding: 10px 8px 9px 10px; background: #babbbd; }
.current button { background: #9d9d9e; }
.active button { background: #1570dc; color: #fff; }
.frame { position: absolute; border: 12px solid #22ff55; pointer-events: none; }
.frame-new { left: 593px; top: 1511px; width: 465px; height: 98px; }
.frame-adjust { left: 1016px; top: 1810px; width: 405px; height: 98px; }
```
